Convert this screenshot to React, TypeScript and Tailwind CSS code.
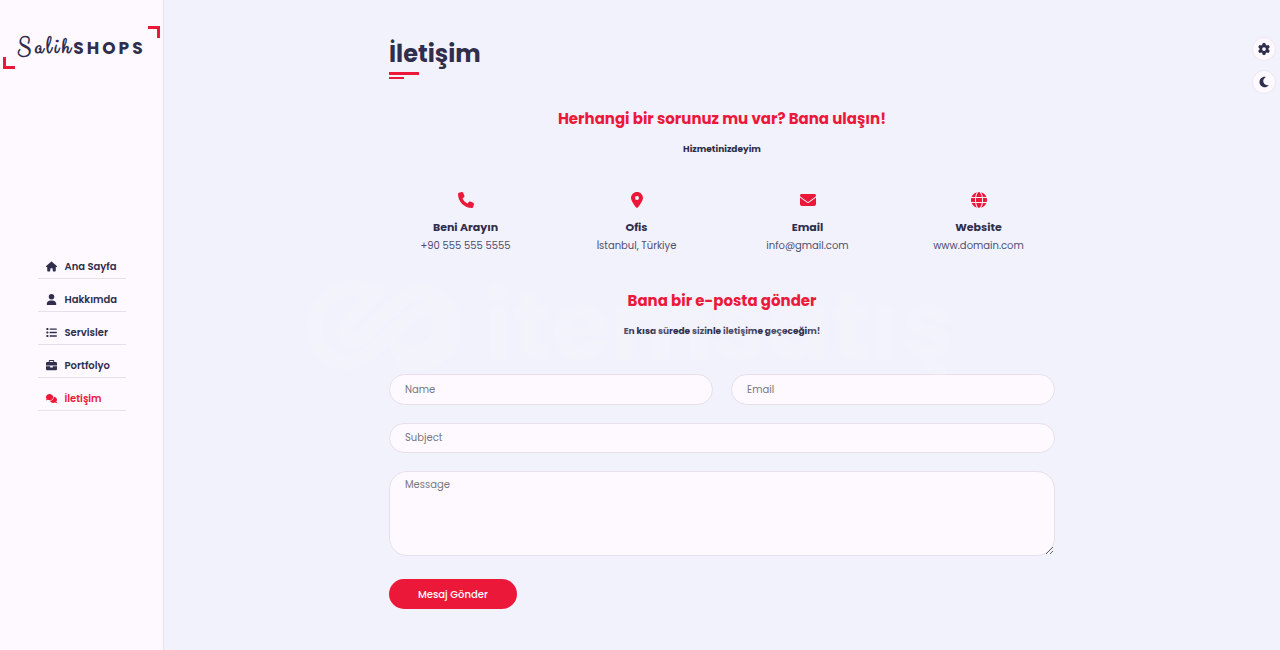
import type { IconType } from 'react-icons';
import {
	FaBriefcase,
	FaComments,
	FaEnvelope,
	FaGear,
	FaGlobe,
	FaHouse,
	FaList,
	FaLocationDot,
	FaMoon,
	FaPhone,
	FaUser,
} from 'react-icons/fa6';

type NavItem = {
	label: string;
	href: string;
	icon: IconType;
	active?: boolean;
};

type ContactItem = {
	title: string;
	value: string;
	icon: IconType;
};

const navItems: NavItem[] = [
	{ label: 'Ana Sayfa', href: '#home', icon: FaHouse },
	{ label: 'Hakkımda', href: '#about', icon: FaUser },
	{ label: 'Servisler', href: '#services', icon: FaList },
	{ label: 'Portfolyo', href: '#portfolio', icon: FaBriefcase },
	{ label: 'İletişim', href: '#contact', icon: FaComments, active: true },
];

const contactItems: ContactItem[] = [
	{ title: 'Beni Arayın', value: '+90 555 555 5555', icon: FaPhone },
	{ title: 'Ofis', value: 'İstanbul, Türkiye', icon: FaLocationDot },
	{ title: 'Email', value: 'info@gmail.com', icon: FaEnvelope },
	{ title: 'Website', value: 'www.domain.com', icon: FaGlobe },
];

const fieldClass =
	'w-full border border-[#e8dfec] bg-[#fdf9ff] px-[15px] text-[10px] text-[#302e4d] placeholder:text-[#7a7880] focus:outline-none';

const Logo = () => (
	<a
		href="#home"
		className="relative mx-[3px] mt-[26px] flex h-[43px] items-center justify-center whitespace-nowrap font-bold tracking-[3px] text-[#302e4d]"
	>
		<span className="absolute right-0 top-0 size-3 border-r-3 border-t-3 border-[#ec1839]" />
		<span className="absolute bottom-0 left-0 size-3 border-b-3 border-l-3 border-[#ec1839]" />
		<span className="font-['Clicker_Script','Liberation_Serif',cursive] text-[24px] leading-6">
			Salih
		</span>
		<span className="text-[17px] leading-6">SHOPS</span>
	</a>
);

const Sidebar = () => (
	<aside className="flex w-[164px] shrink-0 flex-col border-r border-[#e8dfec] bg-[#fdf9ff]">
		<Logo />
		<nav className="mx-auto mt-[177px] w-[88px]">
			<ul>
				{navItems.map(({ label, href, icon: Icon, active }) => (
					<li key={label} className="pt-[9px]">
						<a
							href={href}
							className={`flex h-6 items-center gap-2 whitespace-nowrap border-b border-[#e8dfec] pl-2 text-[10px] font-semibold ${
								active ? 'text-[#ec1839]' : 'text-[#302e4d]'
							}`}
						>
							<Icon className="size-[11px]" />
							{label}
						</a>
					</li>
				))}
			</ul>
		</nav>
	</aside>
);

const ContactInfo = () => (
	<div className="mt-[35px] grid grid-cols-4 gap-[18px] text-center">
		{contactItems.map(({ title, value, icon: Icon }) => (
			<div key={title} className="flex flex-col items-center">
				<Icon className="size-4 text-[#ec1839]" />
				<h4 className="mt-[11px] text-[11px] font-bold leading-4">{title}</h4>
				<p className="mt-[3px] whitespace-nowrap text-[10px] leading-4 text-[#504e70]">
					{value}
				</p>
			</div>
		))}
	</div>
);

const ContactForm = () => (
	<form
		className="mt-[35px] grid grid-cols-2 gap-[18px]"
		onSubmit={(event) => event.preventDefault()}
	>
		<input
			aria-label="Name"
			placeholder="Name"
			className={`${fieldClass} h-[31px] rounded-full`}
		/>
		<input
			type="email"
			aria-label="Email"
			placeholder="Email"
			className={`${fieldClass} h-[31px] rounded-full`}
		/>
		<input
			aria-label="Subject"
			placeholder="Subject"
			className={`${fieldClass} col-span-2 h-[30px] rounded-full`}
		/>
		<textarea
			aria-label="Message"
			placeholder="Message"
			className={`${fieldClass} col-span-2 block h-[85px] rounded-[18px] py-[5px]`}
		/>
		<div className="col-span-2 mt-[5px]">
			<button
				type="submit"
				className="h-[30px] rounded-full bg-[#ec1839] px-[29px] text-[10px] font-medium text-white"
			>
				Mesaj Gönder
			</button>
		</div>
	</form>
);

const Watermark = () => (
	<div
		aria-hidden="true"
		className="pointer-events-none absolute left-[140px] top-[276px] flex items-center gap-5 text-white opacity-15"
	>
		<svg viewBox="0 0 160 100" className="h-[100px] w-40" fill="none">
			<path
				d="M72 16C34 2 8 26 10 54c2 28 30 42 54 24l46-40c16-12 30 0 26 16-4 20-28 30-44 18"
				stroke="currentColor"
				strokeWidth="15"
				strokeLinecap="round"
			/>
			<path
				d="M72 16 44 48c-10 12 4 22 16 12l38-36c20-18 50-4 52 24 2 26-24 46-52 38"
				stroke="currentColor"
				strokeWidth="15"
				strokeLinecap="round"
			/>
		</svg>
		<span className="text-[96px] font-bold leading-[100px]">itemsatış</span>
	</div>
);

const Tools = () => (
	<div className="absolute right-1 top-[37px] flex flex-col gap-[9px]">
		<button
			type="button"
			aria-label="Settings"
			className="flex size-6 items-center justify-center rounded-full border border-[#f0e6f2] bg-[#fdf9ff]"
		>
			<FaGear className="size-3" />
		</button>
		<button
			type="button"
			aria-label="Dark mode"
			className="flex size-6 items-center justify-center rounded-full border border-[#f0e6f2] bg-[#fdf9ff]"
		>
			<FaMoon className="size-3" />
		</button>
	</div>
);

export default function App() {
	return (
		<div className="flex min-h-screen bg-[#f2f2fc] font-['Poppins','Inter',sans-serif] text-[#302e4d]">
			<Sidebar />
			<main className="relative flex-1 px-6 pb-10 pt-[36px]">
				<section className="mx-auto max-w-[666px]">
					<h1 className="text-[24px] font-bold leading-9">İletişim</h1>
					<div className="h-[3px] w-[30px] bg-[#ec1839]" />
					<div className="mt-[2px] h-[2px] w-[15px] bg-[#ec1839]" />

					<h2 className="mt-[28px] text-center text-[15px] font-bold leading-6 text-[#ec1839]">
						Herhangi bir sorunuz mu var? Bana ulaşın!
					</h2>
					<p className="mt-[10px] text-center text-[9px] font-bold leading-4">
						Hizmetinizdeyim
					</p>

					<ContactInfo />

					<h2 className="mt-[35px] text-center text-[15px] font-bold leading-6 text-[#ec1839]">
						Bana bir e-posta gönder
					</h2>
					<p className="mt-[10px] text-center text-[9px] font-bold leading-4">
						En kısa sürede sizinle iletişime geçeceğim!
					</p>

					<ContactForm />
				</section>
				<Watermark />
				<Tools />
			</main>
		</div>
	);
}
